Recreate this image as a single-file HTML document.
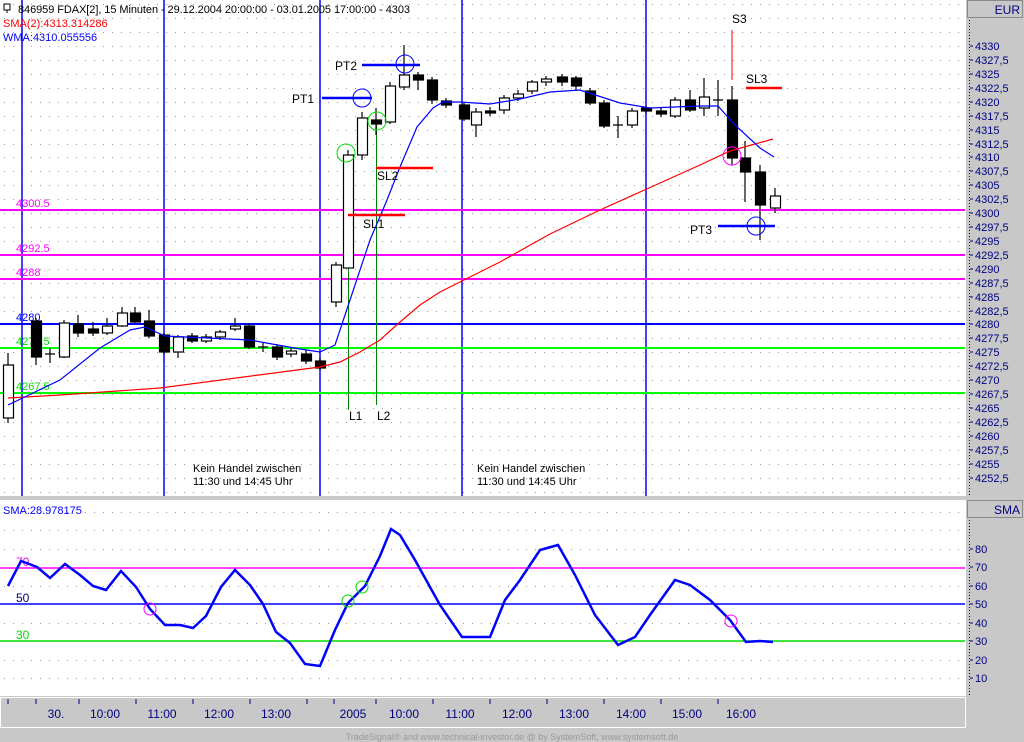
<!DOCTYPE html>
<html><head><meta charset="utf-8"><style>
html,body{margin:0;padding:0;background:#c8c8c8;width:1024px;height:742px;overflow:hidden}
svg{display:block;font-family:"Liberation Sans",sans-serif}
</style></head><body>
<svg width="1024" height="742" viewBox="0 0 1024 742" xmlns="http://www.w3.org/2000/svg">
<rect x="0" y="0" width="1024" height="742" fill="#c8c8c8"/>
<rect x="0" y="0" width="966" height="496" fill="#fff"/>
<rect x="0" y="500" width="966" height="196" fill="#fff"/>
<rect x="967.5" y="0.5" width="55" height="17" fill="#c8c8c8" stroke="#888"/>
<text x="1020" y="14" font-size="12" fill="#000080" text-anchor="end">EUR</text>
<rect x="967.5" y="500.5" width="55" height="17" fill="#c8c8c8" stroke="#888"/>
<text x="1020" y="514" font-size="12" fill="#000080" text-anchor="end">SMA</text>
<line x1="969.5" y1="20" x2="969.5" y2="495" stroke="#000080" stroke-dasharray="1,2"/>
<line x1="969.5" y1="520" x2="969.5" y2="695" stroke="#000080" stroke-dasharray="1,2"/>
<rect x="0.5" y="697.5" width="965" height="30" fill="#c8c8c8" stroke="#fff"/>
<g stroke="#000080" stroke-width="1">
<path d="M8 699v5M36 699v5M79 699v5M136 699v5M193 699v5M250 699v5M307 699v5M334 699v5M376 699v5M433 699v5M490 699v5M547 699v5M604 699v5M661 699v5M718 699v5"/>
</g>
<g font-size="12" fill="#000080" text-anchor="middle">
<text x="56" y="718">30.</text><text x="105" y="718">10:00</text><text x="162" y="718">11:00</text><text x="219" y="718">12:00</text><text x="276" y="718">13:00</text><text x="353" y="718">2005</text><text x="404" y="718">10:00</text><text x="460" y="718">11:00</text><text x="517" y="718">12:00</text><text x="574" y="718">13:00</text><text x="631" y="718">14:00</text><text x="687" y="718">15:00</text><text x="741" y="718">16:00</text>
</g>
<text x="512" y="740" font-size="9" fill="#999" text-anchor="middle">TradeSignal® and www.technical-investor.de @ by SystemSoft, www.systemsoft.de</text>
<g stroke="#999" stroke-dasharray="1,8">
<path d="M4 4.5H965M4 18.5H965M4 32.5H965M4 46.5H965M4 60.5H965M4 74.5H965M4 88.5H965M4 102.5H965M4 116.5H965M4 130.5H965M4 144.5H965M4 157.5H965M4 171.5H965M4 185.5H965M4 199.5H965M4 213.5H965M4 227.5H965M4 241.5H965M4 255.5H965M4 269.5H965M4 283.5H965M4 297.5H965M4 311.5H965M4 324.5H965M4 338.5H965M4 352.5H965M4 366.5H965M4 380.5H965M4 394.5H965M4 408.5H965M4 422.5H965M4 436.5H965M4 450.5H965M4 464.5H965M4 478.5H965M4 492.5H965"/>
<path d="M4 512.5H965M4 530.5H965M4 549.5H965M4 586.5H965M4 623.5H965M4 660.5H965M4 678.5H965"/>
</g>
<g font-size="11" fill="#000080">
<text x="975" y="50">4330</text><text x="975" y="64">4327,5</text><text x="975" y="78">4325</text><text x="975" y="92">4322,5</text><text x="975" y="106">4320</text><text x="975" y="120">4317,5</text><text x="975" y="134">4315</text><text x="975" y="148">4312,5</text><text x="975" y="161">4310</text><text x="975" y="175">4307,5</text><text x="975" y="189">4305</text><text x="975" y="203">4302,5</text><text x="975" y="217">4300</text><text x="975" y="231">4297,5</text><text x="975" y="245">4295</text><text x="975" y="259">4292,5</text><text x="975" y="273">4290</text><text x="975" y="287">4287,5</text><text x="975" y="301">4285</text><text x="975" y="315">4282,5</text><text x="975" y="328">4280</text><text x="975" y="342">4277,5</text><text x="975" y="356">4275</text><text x="975" y="370">4272,5</text><text x="975" y="384">4270</text><text x="975" y="398">4267,5</text><text x="975" y="412">4265</text><text x="975" y="426">4262,5</text><text x="975" y="440">4260</text><text x="975" y="454">4257,5</text><text x="975" y="468">4255</text><text x="975" y="482">4252,5</text>
<text x="975" y="553">80</text><text x="975" y="571">70</text><text x="975" y="590">60</text><text x="975" y="608">50</text><text x="975" y="627">40</text><text x="975" y="645">30</text><text x="975" y="664">20</text><text x="975" y="682">10</text>
</g>
<g stroke="#000080"><path d="M970 46h3M970 60h3M970 74h3M970 88h3M970 102h3M970 116h3M970 130h3M970 144h3M970 157h3M970 171h3M970 185h3M970 199h3M970 213h3M970 227h3M970 241h3M970 255h3M970 269h3M970 283h3M970 297h3M970 311h3M970 324h3M970 338h3M970 352h3M970 366h3M970 380h3M970 394h3M970 408h3M970 422h3M970 436h3M970 450h3M970 464h3M970 478h3M970 549h3M970 567h3M970 586h3M970 604h3M970 623h3M970 641h3M970 660h3M970 678h3"/></g>
<g stroke="#0000ff" stroke-width="1.5"><path d="M22 0V496M164 0V496M320 0V496M462 0V496M646 0V496"/></g>
<g stroke-width="2">
<line x1="0" y1="210" x2="965" y2="210" stroke="#ff00ff"/>
<line x1="0" y1="255" x2="965" y2="255" stroke="#ff00ff"/>
<line x1="0" y1="279" x2="965" y2="279" stroke="#ff00ff"/>
<line x1="0" y1="324" x2="965" y2="324" stroke="#0000ff"/>
<line x1="0" y1="348" x2="965" y2="348" stroke="#00ff00"/>
<line x1="0" y1="393" x2="965" y2="393" stroke="#00ff00"/>
</g>
<g font-size="11">
<text x="16" y="207" fill="#ff00ff">4300.5</text><text x="16" y="252" fill="#ff00ff">4292.5</text><text x="16" y="276" fill="#ff00ff">4288</text>
<text x="16" y="321" fill="#0000ff">4280</text><text x="16" y="345" fill="#00dd00">4275.5</text><text x="16" y="390" fill="#00dd00">4267.5</text>
</g>
<g stroke="#008000"><path d="M348.5 155V410M376.5 120V405"/></g>
<g stroke="#000" stroke-width="1.2" fill="none">
<path d="M8 353V423M36 318V365M50 348V363M64 320V358M78 315V337M93 322V336M107 318V335M122 307V327M135 307V323M149 310V338M164 333V354M178 335V358M192 333V343M206 334V343M220 330V340M235 318V331M249 323V349M263 343V352M277 344V360M291 348V357M306 350V364M320 358V370M336 262V307M348 150V268M362 112V160M376 108V135M390 82V124M404 45V90M418 72V90M432 77V104M446 98V108M464 103V121M476 108V137M490 107V116M504 95V114M518 90V101M532 80V94M546 76V86M562 74V86M576 76V90M590 88V105M604 100V128M618 116V138M632 108V128M646 106V113M661 108V117M675 97V118M690 90V112M704 78V116M718 80V116M732 86V165M745 141V202M760 165V240M775 188V213"/>
<path d="M45 354h10M258 347h10M613 125h10M713 100h10"/>
</g>
<g stroke="#000" stroke-width="1.2">
<g fill="#fff">
<rect x="3.5" y="365" width="10" height="53"/><rect x="59.5" y="323" width="10" height="34"/><rect x="102.5" y="326" width="10" height="7"/><rect x="117.5" y="313" width="10" height="13"/><rect x="173.5" y="337" width="10" height="15"/><rect x="201.5" y="337" width="10" height="4"/><rect x="215.5" y="332" width="10" height="5"/><rect x="230.5" y="326" width="10" height="3"/><rect x="286.5" y="351" width="10" height="3"/>
<rect x="331.5" y="265" width="10" height="37"/><rect x="343.5" y="155" width="10" height="113"/><rect x="357.5" y="118" width="10" height="37"/><rect x="385.5" y="86" width="10" height="36"/><rect x="399.5" y="75" width="10" height="12"/>
<rect x="471.5" y="112" width="10" height="13"/><rect x="499.5" y="98" width="10" height="12"/><rect x="513.5" y="94" width="10" height="4"/><rect x="527.5" y="82" width="10" height="9"/><rect x="541.5" y="79" width="10" height="3"/><rect x="627.5" y="111" width="10" height="14"/><rect x="670.5" y="100" width="10" height="16"/><rect x="699.5" y="97" width="10" height="11"/><rect x="770.5" y="196" width="10" height="12"/>
</g>
<g fill="#000">
<rect x="31.5" y="321" width="10" height="36"/><rect x="73.5" y="324" width="10" height="9"/><rect x="88.5" y="329" width="10" height="4"/><rect x="130.5" y="313" width="10" height="9"/><rect x="144.5" y="321" width="10" height="15"/><rect x="159.5" y="335" width="10" height="17"/><rect x="187.5" y="336" width="10" height="5"/><rect x="244.5" y="326" width="10" height="21"/><rect x="272.5" y="347" width="10" height="10"/><rect x="301.5" y="354" width="10" height="7"/><rect x="315.5" y="361" width="10" height="7" fill="#200"/>
<rect x="371.5" y="120" width="10" height="4"/><rect x="413.5" y="75" width="10" height="5"/><rect x="427.5" y="80" width="10" height="20"/><rect x="441.5" y="101" width="10" height="4"/><rect x="459.5" y="105" width="10" height="14"/><rect x="485.5" y="111" width="10" height="2"/><rect x="557.5" y="77" width="10" height="5"/><rect x="571.5" y="78" width="10" height="8"/><rect x="585.5" y="91" width="10" height="12"/><rect x="599.5" y="103" width="10" height="23"/><rect x="641.5" y="108" width="10" height="3"/><rect x="656.5" y="111" width="10" height="3"/><rect x="685.5" y="100" width="10" height="10"/>
<rect x="727.5" y="100" width="10" height="58"/><rect x="740.5" y="158" width="10" height="14"/><rect x="755.5" y="172" width="10" height="33"/>
</g>
</g>
<polyline fill="none" stroke="#ff0000" stroke-width="1.2" points="8,398 60,395 160,388 320,367 340,362 360,352 380,340 400,322 420,305 440,292 460,282 500,262 550,234 600,210 640,192 700,165 730,151 773,139"/>
<polyline fill="none" stroke="#0000ff" stroke-width="1.2" points="8,405 60,380 100,348 130,330 145,327 165,336 250,340 300,349 320,352 335,345 350,300 370,240 387,200 400,167 417,127 433,108 443,102 460,102 490,104 520,99 550,92 580,90 620,103 650,108 700,106 718,106 735,125 760,148 774,157"/>
<line x1="732" y1="30" x2="732" y2="80" stroke="#ff0000" stroke-width="1"/>
<g stroke="#ff0000" stroke-width="2.5"><path d="M348 215H405M376 168H433M746 88H782"/></g>
<g stroke="#0000ff" stroke-width="2.5"><path d="M322 98H372M362 65H420M718 226H775"/></g>
<g fill="none" stroke-width="1">
<circle cx="362" cy="98" r="9" stroke="#0000ff"/><circle cx="405" cy="64" r="9" stroke="#0000ff"/><circle cx="756" cy="226" r="9" stroke="#0000ff"/>
<circle cx="346" cy="153" r="9" stroke="#00dd00"/><circle cx="377" cy="121" r="9" stroke="#00dd00"/>
<circle cx="732" cy="156" r="9" stroke="#ff00ff"/>
</g>
<g font-size="12" fill="#000">
<text x="335" y="70">PT2</text><text x="292" y="103">PT1</text><text x="690" y="234">PT3</text>
<text x="377" y="180">SL2</text><text x="363" y="228">SL1</text><text x="746" y="83">SL3</text><text x="732" y="23">S3</text>
<text x="349" y="420">L1</text><text x="377" y="420">L2</text>
</g>
<g font-size="11" fill="#000">
<text x="193" y="472">Kein Handel zwischen</text><text x="193" y="485">11:30 und 14:45 Uhr</text>
<text x="477" y="472">Kein Handel zwischen</text><text x="477" y="485">11:30 und 14:45 Uhr</text>
</g>
<rect x="4" y="4" width="6" height="6" fill="none" stroke="#000"/><line x1="7" y1="10" x2="7" y2="13" stroke="#000"/>
<text x="18" y="13" font-size="11" fill="#000" textLength="392">846959  FDAX[2], 15 Minuten - 29.12.2004 20:00:00 - 03.01.2005 17:00:00 - 4303</text>
<text x="3" y="27" font-size="11" fill="#ff0000">SMA(2):4313.314286</text>
<text x="3" y="41" font-size="11" fill="#0000ff">WMA:4310.055556</text>
<text x="3" y="514" font-size="11" fill="#0000ff">SMA:28.978175</text>
<g stroke-width="1.5">
<line x1="0" y1="568" x2="965" y2="568" stroke="#ff00ff"/>
<line x1="0" y1="604" x2="965" y2="604" stroke="#0000ff"/>
<line x1="0" y1="641" x2="965" y2="641" stroke="#00dd00"/>
</g>
<g font-size="12"><text x="16" y="566" fill="#ff00ff">70</text><text x="16" y="602" fill="#000080">50</text><text x="16" y="639" fill="#00dd00">30</text></g>
<polyline fill="none" stroke="#0000ff" stroke-width="2.5" points="8,586 21,561 37,567 50,578 65,564 80,575 93,586 106,590 121,571 136,587 150,609 165,625 180,625 193,628 206,616 221,587 235,570 250,585 263,604 276,632 290,643 305,664 320,666 335,630 348,603 365,586 380,556 391,529 400,535 415,560 440,605 462,637 490,637 505,600 520,580 540,550 558,545 575,575 595,615 618,645 635,637 650,615 675,580 690,585 710,600 730,620 746,642 760,641 773,642"/>
<g fill="none" stroke-width="1">
<circle cx="150" cy="609" r="6" stroke="#ff00ff"/><circle cx="348" cy="601" r="6" stroke="#00dd00"/><circle cx="362" cy="587" r="6" stroke="#00dd00"/><circle cx="731" cy="621" r="6" stroke="#ff00ff"/>
</g>
</svg>
</body></html>
